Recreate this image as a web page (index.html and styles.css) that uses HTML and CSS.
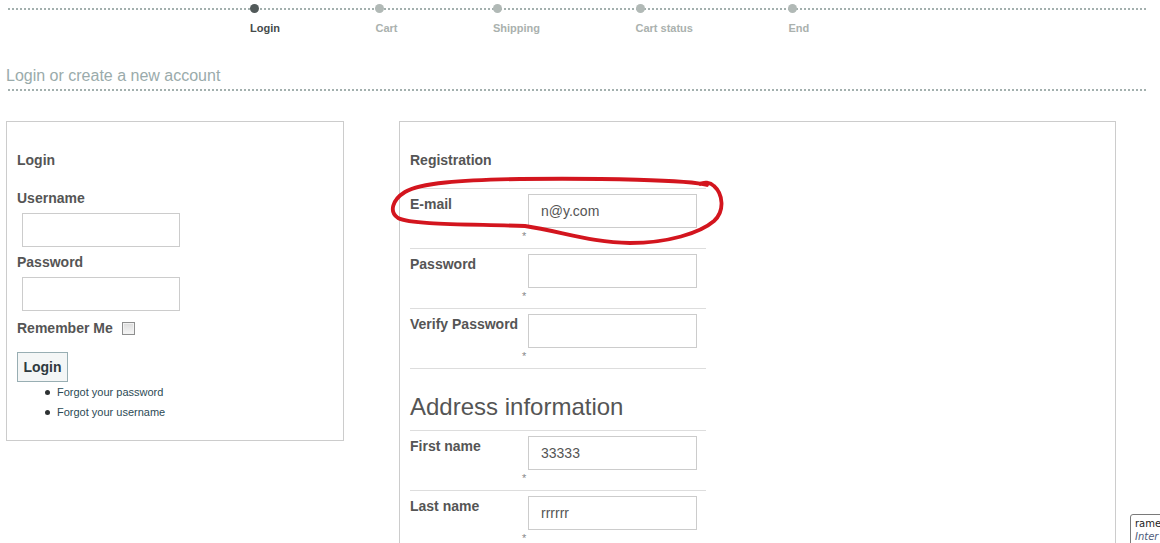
FILE: index.html
```html
<!DOCTYPE html>
<html lang="en">
<head>
<meta charset="utf-8">
<title>Login or create a new account</title>
<link rel="stylesheet" href="styles.css">
</head>
<body>
<div class="page">
  <ol class="steps">
    <li class="step current"><span class="dot"></span><span class="step-label">Login</span></li>
    <li class="step"><span class="dot"></span><span class="step-label">Cart</span></li>
    <li class="step"><span class="dot"></span><span class="step-label">Shipping</span></li>
    <li class="step"><span class="dot"></span><span class="step-label">Cart status</span></li>
    <li class="step"><span class="dot"></span><span class="step-label">End</span></li>
  </ol>

  <div class="title-bar">
    <h1 class="page-title">Login or create a new account</h1>
  </div>

  <div class="panels">
    <section class="panel login-panel">
      <h3 class="panel-heading">Login</h3>
      <label class="field-label">Username</label>
      <div class="text-input small"></div>
      <label class="field-label gap-s">Password</label>
      <div class="text-input small"></div>
      <div class="remember">Remember Me <span class="checkbox"></span></div>
      <button class="btn-login" type="button">Login</button>
      <ul class="links">
        <li><a href="#">Forgot your password</a></li>
        <li><a href="#">Forgot your username</a></li>
      </ul>
    </section>

    <section class="panel reg-panel">
      <h3 class="panel-heading">Registration</h3>
      <div class="rows">
        <div class="row">
          <span class="row-label">E-mail</span>
          <div class="row-field"><div class="text-input wide">n@y.com</div><span class="req">*</span></div>
        </div>
        <div class="row">
          <span class="row-label">Password</span>
          <div class="row-field"><div class="text-input wide"></div><span class="req">*</span></div>
        </div>
        <div class="row">
          <span class="row-label">Verify Password</span>
          <div class="row-field"><div class="text-input wide"></div><span class="req">*</span></div>
        </div>
      </div>
      <h2 class="section-title">Address information</h2>
      <div class="rows last">
        <div class="row">
          <span class="row-label">First name</span>
          <div class="row-field"><div class="text-input wide">33333</div><span class="req">*</span></div>
        </div>
        <div class="row">
          <span class="row-label">Last name</span>
          <div class="row-field"><div class="text-input wide">rrrrrr</div><span class="req">*</span></div>
        </div>
      </div>
    </section>
  </div>
</div>

<svg class="scribble" width="1160" height="543" viewBox="0 0 1160 543" xmlns="http://www.w3.org/2000/svg">
  <path d="M 707 185 C 690 180, 600 178, 520 179 C 460 180, 420 183, 405 192 C 392 200, 389 212, 398 218 C 412 225, 470 224, 525 226 C 560 231, 592 243, 630 243 C 668 243, 700 233, 714 221 C 725 211, 723 194, 714 186 C 710 182, 704 182, 700 184" fill="none" stroke="#d3151e" stroke-width="3.8" stroke-linecap="round" stroke-linejoin="round"/>
</svg>

<div class="tip">rame<br><em>Inter</em></div>
</body>
</html>
```

FILE: styles.css
```css
html, body {
  margin: 0;
  padding: 0;
  overflow: hidden;
  background: #fff;
}

body {
  font-family: "Liberation Sans", Arial, sans-serif;
  color: #555;
  width: 1160px;
  height: 543px;
  position: relative;
}

.page {
  padding-top: 8px;
}

/* ---------- steps ---------- */
.steps {
  list-style: none;
  margin: 0 14px 0 8px;
  padding: 0 0 0 242px;
  border-top: 2px dotted #a3b0ae;
  display: flex;
  gap: 95.5px;
}

.step {
  display: flex;
  flex-direction: column;
  align-items: flex-start;
}

.dot {
  display: block;
  width: 9px;
  height: 9px;
  border-radius: 50%;
  background: #b1b9b6;
  margin-top: -6px;
}

.step.current .dot {
  background: #525a5a;
}

.step-label {
  display: block;
  margin-top: 9px;
  font-size: 11px;
  line-height: 13px;
  font-weight: bold;
  color: #aab1ae;
}

.step.current .step-label {
  color: #454b4b;
}

/* ---------- title ---------- */
.title-bar {
  margin: 32px 14px 0 8px;
  padding-bottom: 4px;
  border-bottom: 2px dotted #a3b0ae;
}

.page-title {
  margin: 0 0 0 -2px;
  font-size: 16px;
  line-height: 18px;
  font-weight: normal;
  color: #9aabab;
}

/* ---------- panels ---------- */
.panels {
  display: flex;
  align-items: flex-start;
  gap: 55px;
  margin-top: 30px;
  padding-left: 6px;
}

.panel {
  border: 1px solid #cccccc;
  box-sizing: border-box;
  padding: 29px 10px 0 10px;
}

.login-panel {
  width: 338px;
  padding-bottom: 18px;
}

.reg-panel {
  width: 717px;
  padding-bottom: 60px;
}

.panel-heading {
  margin: 0;
  font-size: 14px;
  line-height: 18px;
  font-weight: bold;
  color: #555;
}

.field-label {
  display: block;
  margin-top: 20px;
  font-size: 14px;
  line-height: 18px;
  font-weight: bold;
  color: #555;
}

.field-label.gap-s {
  margin-top: 6px;
}

.text-input {
  box-sizing: border-box;
  height: 34px;
  border: 1px solid #cccccc;
  background: #fff;
  font-size: 14px;
  line-height: 32px;
  padding-left: 12px;
  color: #555;
}

.text-input.small {
  width: 158px;
  margin: 6px 0 0 5px;
}

.text-input.wide {
  width: 169px;
}

.remember {
  margin-top: 8px;
  font-size: 14px;
  line-height: 18px;
  font-weight: bold;
  color: #555;
  display: flex;
  align-items: center;
  gap: 9px;
}

.checkbox {
  display: inline-block;
  box-sizing: border-box;
  width: 13px;
  height: 13px;
  border: 1px solid #8e8f8f;
  background: linear-gradient(#dcdcdc, #f6f6f6);
  box-shadow: inset 0 0 0 1px #f2f2f2;
}

.btn-login {
  display: block;
  margin-top: 15px;
  box-sizing: border-box;
  width: 51px;
  height: 30px;
  padding: 0;
  border: 1px solid #98aeb3;
  background: #f4f6f6;
  font-family: "Liberation Sans", Arial, sans-serif;
  font-size: 14px;
  font-weight: bold;
  color: #2f3a3f;
}

.links {
  margin: 0;
  padding-left: 40px;
  list-style: none;
  font-size: 11px;
  line-height: 20px;
  color: #333;
}

.links li {
  position: relative;
}

.links li::before {
  content: "";
  position: absolute;
  left: -12px;
  top: 8px;
  width: 5px;
  height: 5px;
  border-radius: 50%;
  background: #2e3233;
}

.links a {
  color: #2c4a55;
  text-decoration: none;
}

/* ---------- registration ---------- */
.reg-panel .panel-heading {
  margin-bottom: 19px;
}

.rows {
  width: 296px;
  border-bottom: 1px solid #dddddd;
}

.rows.last {
  border-bottom: none;
}

.row {
  display: grid;
  grid-template-columns: 118px 1fr;
  border-top: 1px solid #dddddd;
  padding: 5px 0 6px;
}

.row-label {
  padding-top: 1px;
  font-size: 14px;
  line-height: 18px;
  font-weight: bold;
  color: #555;
}

.req {
  display: block;
  margin: 2px 0 0 -6px;
  font-size: 11px;
  line-height: 12px;
  height: 12px;
  color: #8a8a8a;
}

.section-title {
  margin: 24px 0 9px;
  font-size: 24px;
  line-height: 28px;
  font-weight: normal;
  color: #555;
}

/* ---------- overlays ---------- */
.scribble {
  position: absolute;
  left: 0;
  top: 0;
  pointer-events: none;
}

.tip {
  position: absolute;
  left: 1130px;
  top: 514px;
  width: 80px;
  padding: 2px 4px;
  border: 1px solid #7a7a7a;
  border-radius: 3px 0 0 0;
  background: #fff;
  font-family: "DejaVu Sans", sans-serif;
  font-size: 10px;
  line-height: 13px;
  color: #222;
}

.tip em {
  color: #4d5b7c;
}
```
